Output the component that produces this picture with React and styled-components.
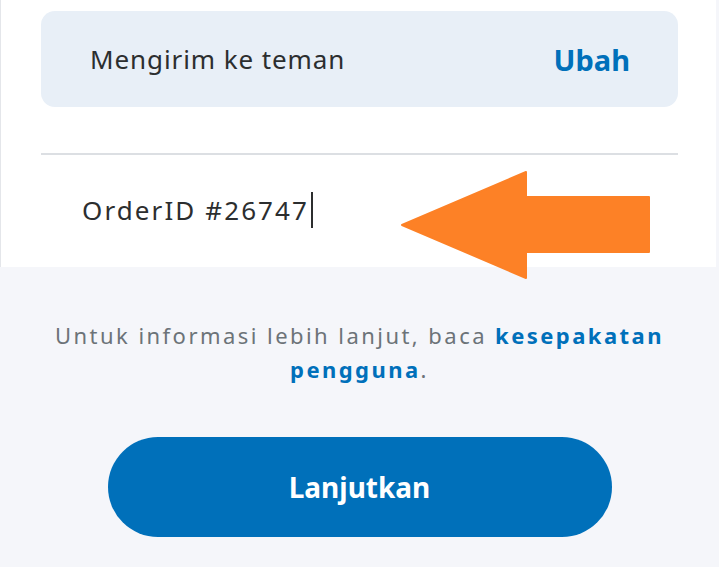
import React from 'react';
import styled, { createGlobalStyle } from 'styled-components';

const GlobalStyle = createGlobalStyle`
  html, body {
    margin: 0;
    padding: 0;
    background: #f5f6fa;
    font-family: "Noto Sans", "Open Sans", sans-serif;
  }
`;

const Page = styled.div`
  width: 719px;
  height: 567px;
  overflow: hidden;
  background: #f5f6fa;
`;

const Sheet = styled.div`
  position: relative;
  margin: 0 3px 0 0;
  height: 267px;
  background: #ffffff;
  border-left: 1px solid #e4e6ea;
  box-sizing: border-box;
  padding: 11px 38px 0 40px;
`;

const ModeCard = styled.div`
  height: 96px;
  border-radius: 14px;
  background: #e8eff7;
  display: flex;
  align-items: center;
  justify-content: space-between;
  padding: 0 48px 0 49px;
`;

const ModeLabel = styled.span`
  font-size: 26px;
  color: #2c2e2f;
  letter-spacing: 0.9px;
`;

const ChangeLink = styled.span`
  font-size: 29px;
  font-weight: 700;
  color: #0070ba;
`;

const Divider = styled.hr`
  margin: 46px 0 0;
  border: 0;
  height: 2px;
  background: #dcdfe3;
`;

const NoteField = styled.div`
  display: flex;
  align-items: center;
  height: 110px;
  padding-left: 41px;
  font-size: 26px;
  color: #2c2e2f;
  letter-spacing: 2.1px;
`;

const Caret = styled.span`
  display: inline-block;
  width: 2px;
  height: 36px;
  margin-left: 2px;
  background: #2c2e2f;
`;

const ArrowMark = styled.svg`
  position: absolute;
  left: 400px;
  top: 170px;
`;

const Footer = styled.div`
  display: flex;
  flex-direction: column;
  align-items: center;
  padding-top: 51px;
`;

const Terms = styled.p`
  margin: 0;
  width: 680px;
  text-align: center;
  font-size: 22px;
  line-height: 34px;
  letter-spacing: 2.45px;
  color: #6c7378;
`;

const TermsLink = styled.a`
  color: #0070ba;
  font-weight: 700;
  text-decoration: none;
`;

const PrimaryButton = styled.button`
  margin-top: 51px;
  width: 504px;
  height: 100px;
  border: 0;
  border-radius: 50px;
  background: #0070ba;
  color: #ffffff;
  font-family: "Noto Sans", "Open Sans", sans-serif;
  font-size: 28px;
  font-weight: 700;
  cursor: pointer;
`;

export default function App() {
  return (
    <Page>
      <GlobalStyle />
      <Sheet>
        <ModeCard>
          <ModeLabel>Mengirim ke teman</ModeLabel>
          <ChangeLink>Ubah</ChangeLink>
        </ModeCard>
        <Divider />
        <NoteField>
          OrderID #26747
          <Caret />
        </NoteField>
        <ArrowMark width="250" height="110" viewBox="0 0 250 110">
          <path
            d="M1 55 L125 2 L125 27 L248 27 L248 82 L125 82 L125 108 Z"
            fill="#fd8126"
            stroke="#fd8126"
            strokeWidth="2"
            strokeLinejoin="round"
          />
        </ArrowMark>
      </Sheet>
      <Footer>
        <Terms>
          Untuk informasi lebih lanjut, baca <TermsLink href="#">kesepakatan</TermsLink>{' '}
          <TermsLink href="#">pengguna</TermsLink>.
        </Terms>
        <PrimaryButton>Lanjutkan</PrimaryButton>
      </Footer>
    </Page>
  );
}
